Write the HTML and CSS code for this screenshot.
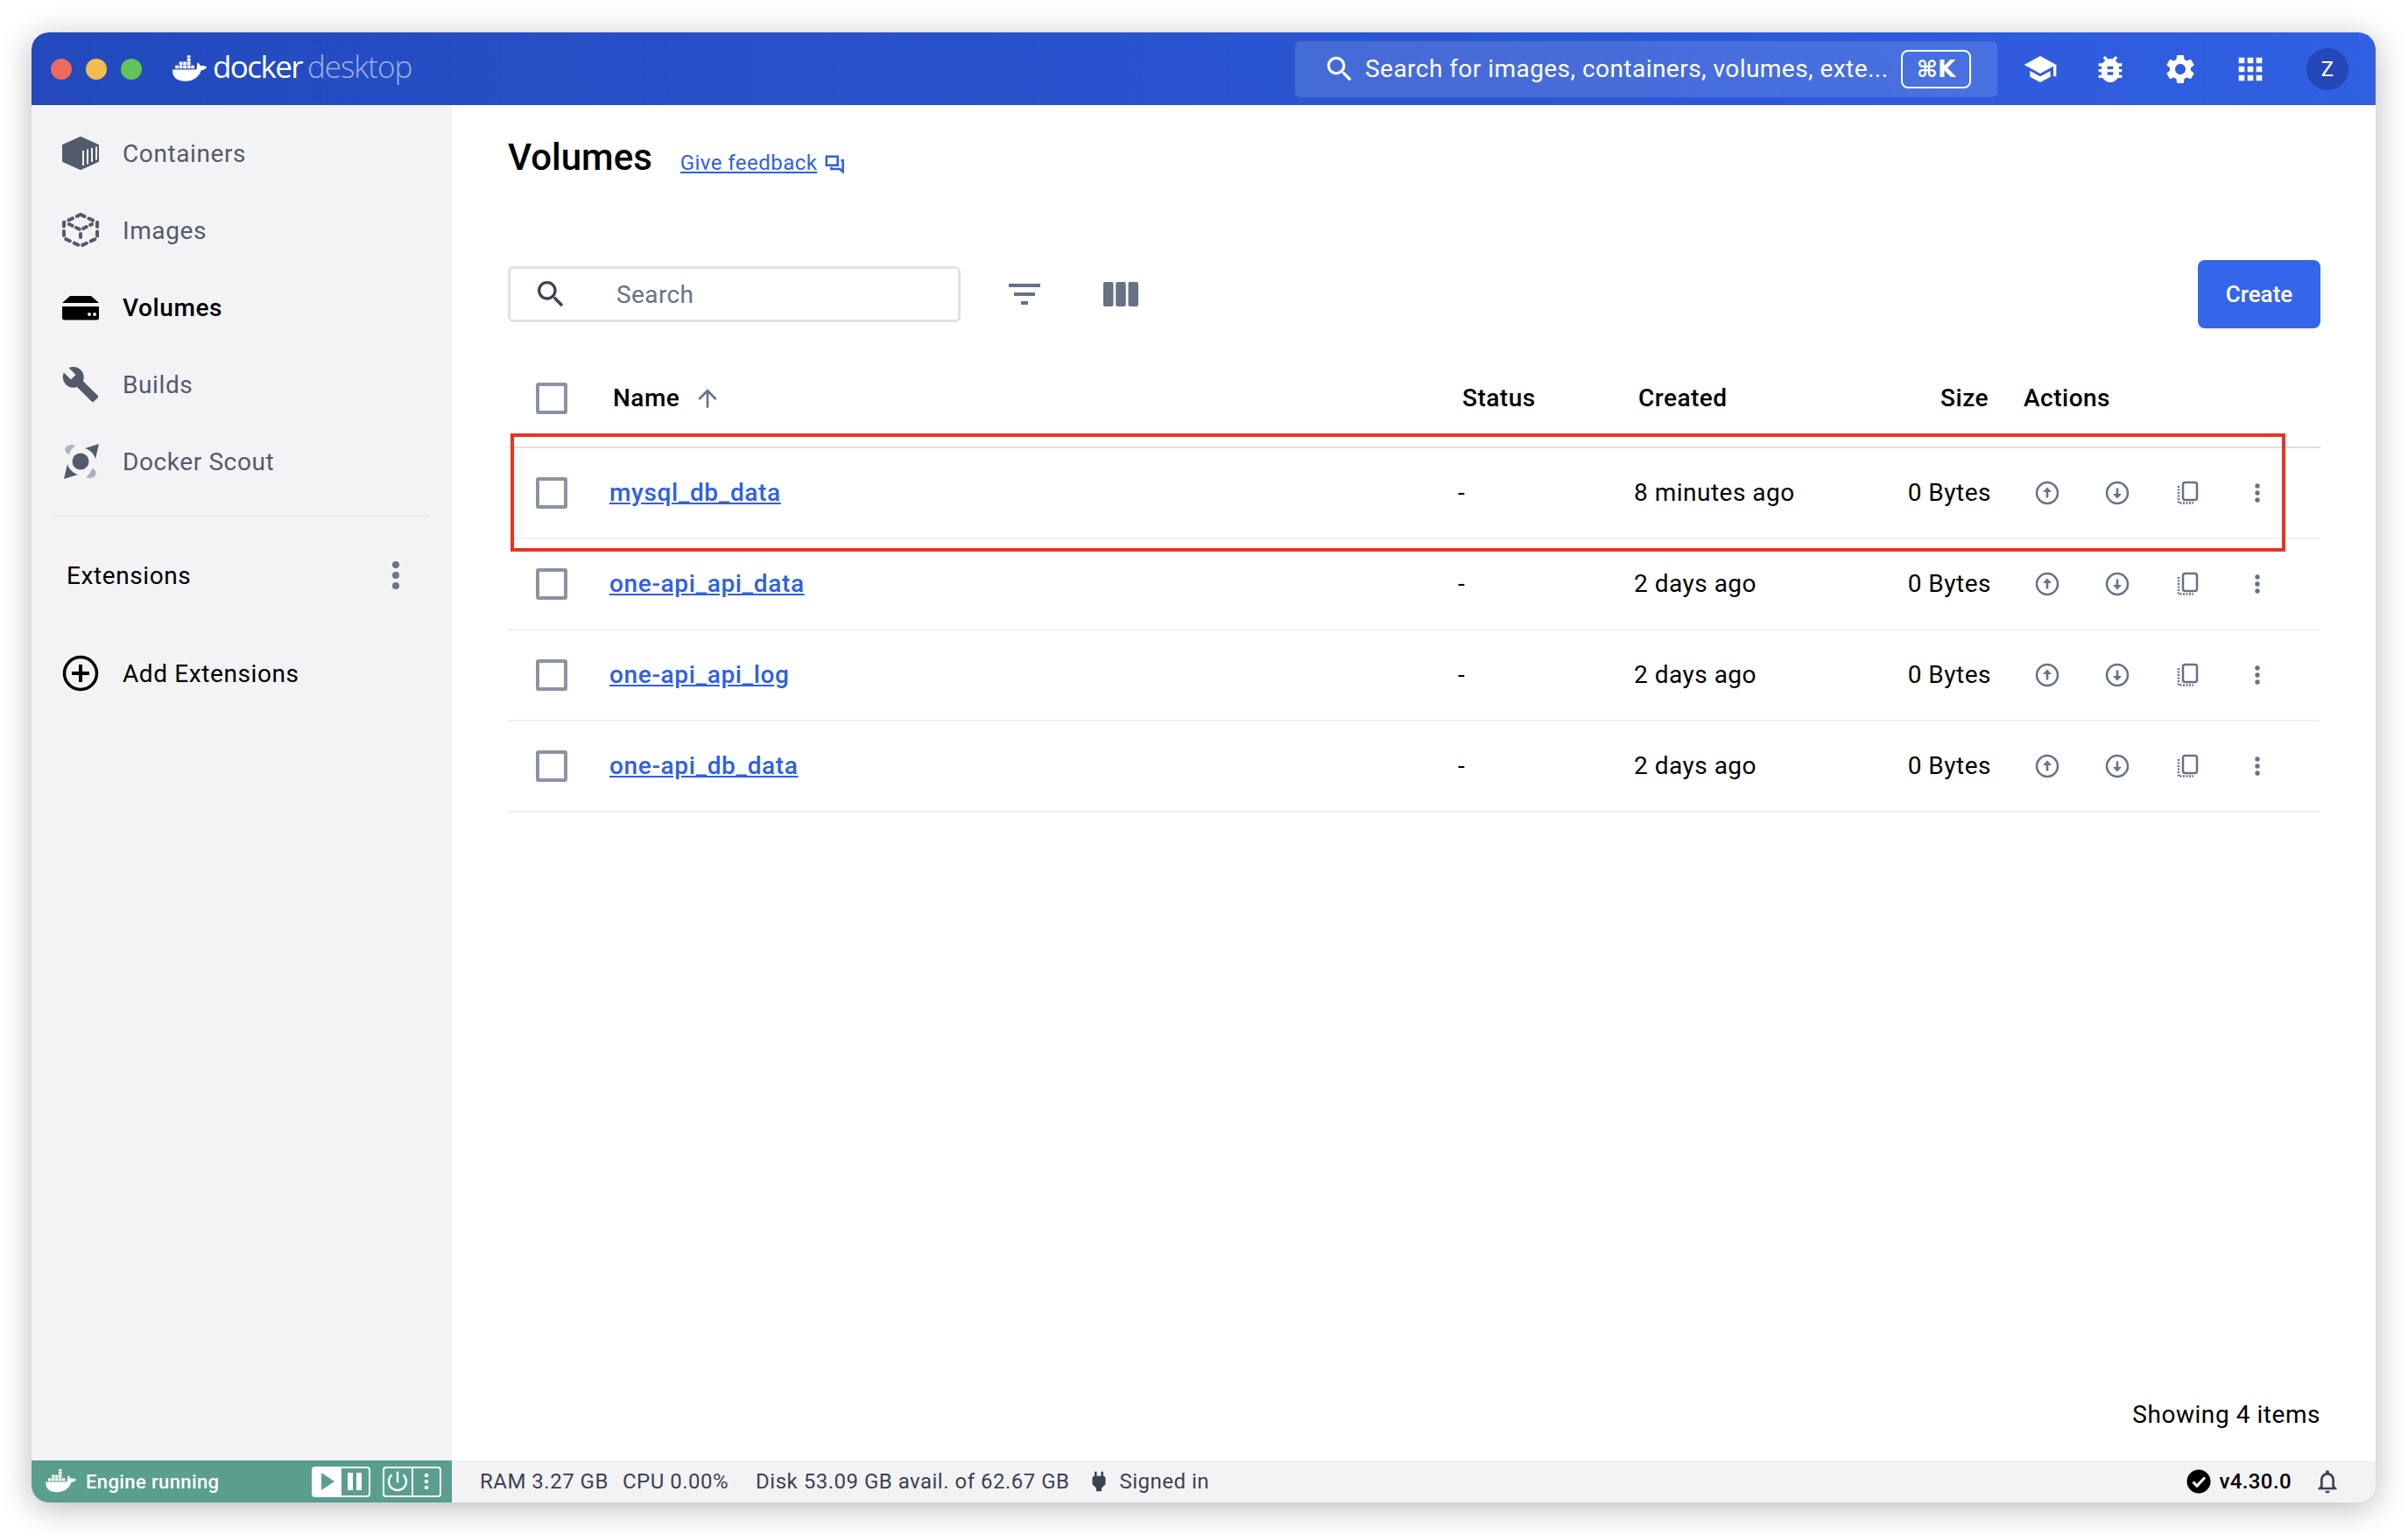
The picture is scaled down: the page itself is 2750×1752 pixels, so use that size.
FILE: index.html
```html
<!DOCTYPE html>
<html lang="en">
<head>
    <meta charset="UTF-8">
    <title>Docker Desktop - Volumes</title>
    <link rel="stylesheet" href="styles.css">
</head>
<body>
    <!-- Iconos repetidos -->
    <svg class="defs" width="0" height="0">
        <symbol id="whale" viewBox="0 0 40 30">
            <path fill="currentColor" d="M4 11h3.600v3.400H4zM8.300 11h3.600v3.400H8.300zM12.600 11h3.600v3.400h-3.600zM16.900 11h3.600v3.400h-3.600zM21.200 11h3.600v3.400h-3.600zM8.300 7h3.600v3.400H8.300zM12.600 7h3.600v3.400h-3.600zM16.900 7h3.600v3.400h-3.600zM16.900 3h3.600v3.400h-3.600zM16.900 0h3.600v2.400h-3.600z"/>
            <path fill="currentColor" d="M1 15.500h24.800c1.200 0 1.800-1.500 1.700-3.300-.1-1.700.2-3.500 1-4.700 1.300 1 2.400 2.500 2.800 4.100 1.500-.7 3.400-.6 6.200.5.800.3.800.9.300 1.400-1.400 1.700-3.500 2.500-5.500 2.600C29.800 23.500 23.500 28 14.800 28 6 28 .6 24.300 1 15.500z"/>
        </symbol>
        <symbol id="up" viewBox="0 0 32 32">
            <circle cx="16" cy="16" r="12" fill="none" stroke="currentColor" stroke-width="2.500"/>
            <path fill="currentColor" d="M16 9.500l5 5.500h-3.700v6.500h-2.600V15H11z"/>
        </symbol>
        <symbol id="down" viewBox="0 0 32 32">
            <circle cx="16" cy="16" r="12" fill="none" stroke="currentColor" stroke-width="2.500"/>
            <path fill="currentColor" d="M16 22.500L11 17h3.700v-6.500h2.600V17H21z"/>
        </symbol>
        <symbol id="copy" viewBox="0 0 32 32">
            <rect x="11" y="4" width="16" height="20" rx="2.500" fill="none" stroke="currentColor" stroke-width="2.500"/>
            <path fill="none" stroke="currentColor" stroke-width="2.500" stroke-dasharray="2 1.500" d="M6 8v19.500h17"/>
        </symbol>
        <symbol id="more" viewBox="0 0 32 32">
            <circle cx="16" cy="8" r="2.700" fill="currentColor"/>
            <circle cx="16" cy="16" r="2.700" fill="currentColor"/>
            <circle cx="16" cy="24" r="2.700" fill="currentColor"/>
        </symbol>
    </svg>

    <div class="window">
        <!-- Barra superior -->
        <header class="titlebar">
            <div class="lights">
                <span class="light red"></span>
                <span class="light yellow"></span>
                <span class="light green"></span>
            </div>
            <div class="logo">
                <svg class="logo-whale" width="42" height="32"><use href="#whale"/></svg>
                <span class="logo-docker">docker</span>
                <span class="logo-desktop">desktop</span>
            </div>
            <div class="global-search">
                <svg class="global-search-icon" viewBox="0 0 24 24" width="38" height="38"><path fill="currentColor" d="M15.500 14h-.79l-.28-.27C15.410 12.590 16 11.110 16 9.500 16 5.910 13.090 3 9.500 3S3 5.910 3 9.500 5.910 16 9.500 16c1.610 0 3.090-.59 4.230-1.570l.27.28v.79l5 4.990L20.490 19l-4.990-5zm-6 0C7.010 14 5 11.990 5 9.500S7.010 5 9.500 5 14 7.010 14 9.500 11.990 14 9.500 14z"/></svg>
                <span class="global-search-text">Search for images, containers, volumes, exte...</span>
                <span class="kbd">⌘K</span>
            </div>
            <div class="top-icons">
                <svg viewBox="0 0 24 24" width="40" height="40"><path fill="currentColor" d="M5 13.180v4L12 21l7-3.820v-4L12 17l-7-3.820zM12 3L1 9l11 6 9-4.910V17h2V9L12 3z"/></svg>
                <svg viewBox="0 0 24 24" width="40" height="40"><path fill="currentColor" d="M20 8h-2.810c-.45-.78-1.070-1.450-1.820-1.960L17 4.410 15.590 3l-2.170 2.170C12.960 5.060 12.490 5 12 5c-.49 0-.96.06-1.410.17L8.410 3 7 4.410l1.620 1.630C7.880 6.550 7.260 7.220 6.810 8H4v2h2.090c-.05.33-.09.66-.09 1v1H4v2h2v1c0 .34.04.67.09 1H4v2h2.810c1.040 1.790 2.970 3 5.190 3s4.150-1.210 5.190-3H20v-2h-2.090c.05-.33.09-.66.09-1v-1h2v-2h-2v-1c0-.34-.04-.67-.09-1H20V8zm-6 8h-4v-2h4v2zm0-4h-4v-2h4v2z"/></svg>
                <svg viewBox="0 0 24 24" width="40" height="40"><path fill="currentColor" d="M19.140 12.940c.04-.3.06-.61.06-.94 0-.32-.02-.64-.07-.94l2.030-1.580c.18-.14.23-.41.12-.61l-1.920-3.320c-.12-.22-.37-.29-.59-.22l-2.390.96c-.5-.38-1.030-.7-1.620-.94l-.36-2.540c-.04-.24-.24-.41-.48-.41h-3.840c-.24 0-.43.17-.47.41l-.36 2.540c-.59.24-1.130.57-1.620.94l-2.390-.96c-.22-.08-.47 0-.59.22L2.740 8.870c-.12.21-.08.47.12.61l2.030 1.580c-.05.3-.09.63-.09.94s.02.64.07.94l-2.030 1.580c-.18.14-.23.41-.12.61l1.920 3.320c.12.22.37.29.59.22l2.390-.96c.5.38 1.030.7 1.620.94l.36 2.540c.05.24.24.41.48.41h3.840c.24 0 .44-.17.47-.41l.36-2.540c.59-.24 1.130-.56 1.620-.94l2.390.96c.22.08.47 0 .59-.22l1.920-3.320c.12-.22.07-.47-.12-.61l-2.010-1.580zM12 15.600c-1.980 0-3.600-1.620-3.600-3.600s1.620-3.600 3.600-3.600 3.600 1.620 3.600 3.600-1.620 3.600-3.600 3.600z"/></svg>
                <svg viewBox="0 0 24 24" width="40" height="40"><path fill="currentColor" d="M4 4h4v4H4zM10 4h4v4h-4zM16 4h4v4h-4zM4 10h4v4H4zM10 10h4v4h-4zM16 10h4v4h-4zM4 16h4v4H4zM10 16h4v4h-4zM16 16h4v4h-4z"/></svg>
            </div>
            <div class="avatar">Z</div>
        </header>

        <div class="middle">
            <!-- Menu lateral -->
            <nav class="sidebar">
                <a class="nav-item">
                    <svg class="nav-icon" viewBox="0 0 44 40" width="44" height="40">
                        <path fill="currentColor" stroke="currentColor" stroke-width="2" stroke-linejoin="round" d="M22 2l20 9v18L22 38 2 29V11z"/>
                        <path fill="none" stroke="#f3f3f6" stroke-width="2" d="M25 17v17M30 15.500v17M35 14v16M40 12.500v15"/>
                    </svg>
                    Containers
                </a>
                <a class="nav-item">
                    <svg class="nav-icon" viewBox="0 0 44 40" width="44" height="40">
                        <path fill="none" stroke="currentColor" stroke-width="4" stroke-linecap="round" stroke-dasharray="5 5.500" d="M22 2l19 9v18L22 38 3 29V11z"/>
                        <path fill="none" stroke="currentColor" stroke-width="4" stroke-linecap="round" stroke-dasharray="4 5" d="M9 13l13 6.500L35 13M22 24v9"/>
                    </svg>
                    Images
                </a>
                <a class="nav-item active">
                    <svg class="nav-icon" viewBox="0 0 44 40" width="44" height="40">
                        <path fill="currentColor" d="M10 7h24l9 8H1zM1 19h42v13c0 1.500-.9 2.500-2.500 2.500h-37C1.900 34.500 1 33.500 1 32z"/>
                        <circle cx="32" cy="28" r="2" fill="#f3f3f6"/>
                        <circle cx="38" cy="28" r="2" fill="#f3f3f6"/>
                    </svg>
                    Volumes
                </a>
                <a class="nav-item">
                    <svg class="nav-icon" viewBox="0 0 24 24" width="48" height="48"><path fill="currentColor" d="M22.700 19l-9.100-9.100c.9-2.300.4-5-1.500-6.900-2-2-5-2.400-7.400-1.300L9 6 6 9 1.600 4.700C.4 7.100.9 10.100 2.900 12.100c1.900 1.900 4.600 2.400 6.900 1.500l9.100 9.100c.4.4 1 .4 1.400 0l2.300-2.300c.5-.4.5-1.100.1-1.400z"/></svg>
                    Builds
                </a>
                <a class="nav-item">
                    <svg class="nav-icon" viewBox="0 0 44 44" width="44" height="44">
                        <circle cx="22" cy="22" r="9.500" fill="currentColor"/>
                        <path fill="currentColor" d="M43 2l-4 17c-2-6-6-10-12-12zM3 42l4-17c2 6 6 10 12 12z"/>
                        <path fill="#aeb1ba" d="M5 6c2-3 8-4 11-2-3 2-6 6-7 10-4-1-6-5-4-8zM39 38c-2 3-8 4-11 2 3-2 6-6 7-10 4 1 6 5 4 8z"/>
                    </svg>
                    Docker Scout
                </a>
                <div class="nav-divider"></div>
                <div class="extensions">
                    <span>Extensions</span>
                    <svg class="ext-more" width="48" height="48" viewBox="0 0 32 32"><use href="#more"/></svg>
                </div>
                <a class="nav-item add-ext">
                    <svg class="nav-icon" viewBox="0 0 44 44" width="44" height="44">
                        <circle cx="22" cy="22" r="18.500" fill="none" stroke="currentColor" stroke-width="3.500"/>
                        <path fill="currentColor" d="M20 12h4v8h8v4h-8v8h-4v-8h-8v-4h8z"/>
                    </svg>
                    Add Extensions
                </a>
            </nav>

            <!-- Contenido principal -->
            <main class="main">
                <div class="title-row">
                    <h1 class="title">Volumes</h1>
                    <a class="feedback">Give feedback</a>
                    <svg class="feedback-icon" viewBox="0 0 24 24" width="22" height="22">
                        <path fill="none" stroke="currentColor" stroke-width="2.800" d="M2 3h14v11H2zM20 8h2.500v14l-4-3.500H8V16"/>
                    </svg>
                </div>

                <div class="toolbar">
                    <div class="search">
                        <svg class="search-icon" viewBox="0 0 24 24" width="40" height="40"><path fill="currentColor" d="M15.500 14h-.79l-.28-.27C15.410 12.590 16 11.110 16 9.500 16 5.910 13.090 3 9.500 3S3 5.910 3 9.500 5.910 16 9.500 16c1.610 0 3.090-.59 4.230-1.570l.27.28v.79l5 4.990L20.490 19l-4.990-5zm-6 0C7.010 14 5 11.990 5 9.500S7.010 5 9.500 5 14 7.010 14 9.500 11.990 14 9.500 14z"/></svg>
                        <span class="search-text">Search</span>
                    </div>
                    <svg class="filter-icon" viewBox="0 0 24 24" width="48" height="48"><path fill="currentColor" d="M10 18h4v-2h-4v2zM3 6v2h18V6H3zm3 7h12v-2H6v2z"/></svg>
                    <svg class="columns-icon" viewBox="0 0 40 28" width="40" height="28"><rect width="11.500" height="28" rx="2" fill="currentColor"/><rect x="14.250" width="11.500" height="28" rx="2" fill="currentColor"/><rect x="28.500" width="11.500" height="28" rx="2" fill="currentColor"/></svg>
                    <button class="create">Create</button>
                </div>

                <div class="table">
                    <div class="row head">
                        <div class="cell"><span class="check"></span></div>
                        <div class="cell name-head">Name
                            <svg class="sort-icon" viewBox="0 0 24 24" width="32" height="32"><path fill="currentColor" d="M4 12l1.410 1.410L11 7.830V20h2V7.830l5.580 5.590L20 12l-8-8-8 8z"/></svg>
                        </div>
                        <div class="cell status-head">Status</div>
                        <div class="cell created-head">Created</div>
                        <div class="cell size size-head">Size</div>
                        <div class="cell actions-head">Actions</div>
                    </div>

                    <div class="row">
                        <div class="cell"><span class="check"></span></div>
                        <div class="cell"><a class="vol-link">mysql_db_data</a></div>
                        <div class="cell">-</div>
                        <div class="cell">8 minutes ago</div>
                        <div class="cell size">0 Bytes</div>
                        <div class="cell actions">
                            <svg width="32" height="32"><use href="#up"/></svg>
                            <svg width="32" height="32"><use href="#down"/></svg>
                            <svg width="32" height="32"><use href="#copy"/></svg>
                            <svg width="32" height="32"><use href="#more"/></svg>
                        </div>
                    </div>

                    <div class="row">
                        <div class="cell"><span class="check"></span></div>
                        <div class="cell"><a class="vol-link">one-api_api_data</a></div>
                        <div class="cell">-</div>
                        <div class="cell">2 days ago</div>
                        <div class="cell size">0 Bytes</div>
                        <div class="cell actions">
                            <svg width="32" height="32"><use href="#up"/></svg>
                            <svg width="32" height="32"><use href="#down"/></svg>
                            <svg width="32" height="32"><use href="#copy"/></svg>
                            <svg width="32" height="32"><use href="#more"/></svg>
                        </div>
                    </div>

                    <div class="row">
                        <div class="cell"><span class="check"></span></div>
                        <div class="cell"><a class="vol-link">one-api_api_log</a></div>
                        <div class="cell">-</div>
                        <div class="cell">2 days ago</div>
                        <div class="cell size">0 Bytes</div>
                        <div class="cell actions">
                            <svg width="32" height="32"><use href="#up"/></svg>
                            <svg width="32" height="32"><use href="#down"/></svg>
                            <svg width="32" height="32"><use href="#copy"/></svg>
                            <svg width="32" height="32"><use href="#more"/></svg>
                        </div>
                    </div>

                    <div class="row">
                        <div class="cell"><span class="check"></span></div>
                        <div class="cell"><a class="vol-link">one-api_db_data</a></div>
                        <div class="cell">-</div>
                        <div class="cell">2 days ago</div>
                        <div class="cell size">0 Bytes</div>
                        <div class="cell actions">
                            <svg width="32" height="32"><use href="#up"/></svg>
                            <svg width="32" height="32"><use href="#down"/></svg>
                            <svg width="32" height="32"><use href="#copy"/></svg>
                            <svg width="32" height="32"><use href="#more"/></svg>
                        </div>
                    </div>
                </div>

                <div class="items-count">Showing 4 items</div>

                <!-- Recuadro rojo sobre la primera fila -->
                <div class="highlight"></div>
            </main>
        </div>

        <!-- Barra de estado -->
        <footer class="statusbar">
            <div class="engine">
                <svg class="engine-whale" width="38" height="28"><use href="#whale"/></svg>
                <span class="engine-text">Engine running</span>
                <div class="engine-group">
                    <span class="engine-btn filled">
                        <svg viewBox="0 0 20 24" width="20" height="24"><path fill="#5a9e8d" d="M3 2l15 10L3 22z"/></svg>
                    </span>
                    <span class="engine-btn">
                        <svg viewBox="0 0 20 24" width="20" height="24"><path fill="#fff" d="M2 2h6v20H2zM12 2h6v20h-6z"/></svg>
                    </span>
                </div>
                <div class="engine-group second">
                    <span class="engine-btn">
                        <svg viewBox="0 0 24 24" width="30" height="30"><path fill="#fff" d="M13 3h-2v10h2V3zm4.830 2.170l-1.420 1.420C17.990 7.860 19 9.810 19 12c0 3.870-3.130 7-7 7s-7-3.130-7-7c0-2.190 1.010-4.140 2.580-5.420L6.170 5.170C4.230 6.820 3 9.260 3 12c0 4.970 4.030 9 9 9s9-4.030 9-9c0-2.740-1.230-5.180-3.170-6.830z"/></svg>
                    </span>
                    <span class="engine-btn">
                        <svg width="28" height="28" viewBox="0 0 32 32"><use href="#more"/></svg>
                    </span>
                </div>
            </div>
            <div class="stats">
                <span class="stat">RAM 3.27 GB</span>
                <span class="stat">CPU 0.00%</span>
                <span class="stat disk">Disk 53.09 GB avail. of 62.67 GB</span>
                <svg class="plug" viewBox="0 0 24 24" width="30" height="30"><path fill="currentColor" d="M16 7V3h-2v4h-4V3H8v4h-.01C6.900 6.990 6 7.890 6 8.980v5.520L9.500 18v3h5v-3l3.500-3.500V9c0-1.100-.9-2-2-2z"/></svg>
                <span class="stat">Signed in</span>
            </div>
            <div class="version">
                <svg viewBox="0 0 28 28" width="28" height="28">
                    <circle cx="14" cy="14" r="13.500" fill="#000"/>
                    <path fill="none" stroke="#fff" stroke-width="3" d="M7.500 14.500l4.500 4.500 9-9.500"/>
                </svg>
                <span class="version-text">v4.30.0</span>
                <svg class="bell" viewBox="0 0 24 24" width="32" height="32"><path fill="currentColor" d="M12 22c1.100 0 2-.9 2-2h-4c0 1.100.9 2 2 2zm6-6v-5c0-3.070-1.630-5.640-4.500-6.320V4c0-.83-.67-1.500-1.500-1.500s-1.500.67-1.500 1.500v.68C7.640 5.360 6 7.920 6 11v5l-2 2v1h16v-1l-2-2zm-2 1H8v-6c0-2.480 1.510-4.500 4-4.500s4 2.020 4 4.500v6z"/></svg>
            </div>
        </footer>
    </div>
</body>
</html>
```

FILE: styles.css
```css
/* Estilo general */
body {
    margin: 0;
    background-color: #fff;
    font-family: Roboto, "Liberation Sans", sans-serif;
    color: #000;
    width: 2750px;
    height: 1752px;
    overflow: hidden;
}

.defs {
    position: absolute;
}

.window {
    margin: 37px 0 0 36px;
    width: 2677px;
    height: 1679px;
    display: flex;
    flex-direction: column;
    border-radius: 20px;
    overflow: hidden;
    background-color: #fff;
    box-shadow: 0 6px 36px rgba(0, 0, 0, 0.28);
}

/* Barra superior */
.titlebar {
    height: 83px;
    flex-shrink: 0;
    display: flex;
    align-items: center;
    padding: 0 31px 0 22px;
    color: #fff;
    background: linear-gradient(90deg, #2349bd, #305fe2);
    box-sizing: border-box;
}

.lights {
    display: flex;
    gap: 16px;
}

.light {
    width: 24px;
    height: 24px;
    border-radius: 50%;
}

.red { background-color: #ee6a5f; }
.yellow { background-color: #f5bd4f; }
.green { background-color: #61c454; }

.logo {
    display: flex;
    align-items: center;
    margin-left: 34px;
}

.logo-whale {
    color: #fff;
    margin-right: 5px;
}

.logo-docker {
    margin-top: -7px;
    font-family: "Open Sans", sans-serif;
    font-size: 35px;
    font-weight: 400;
    letter-spacing: -1.6px;
    margin-right: 6px;
}

.logo-desktop {
    margin-top: -7px;
    font-family: "Open Sans", sans-serif;
    font-size: 35px;
    font-weight: 300;
    letter-spacing: -1px;
    color: #9db2e8;
}

.global-search {
    margin-left: auto;
    width: 802px;
    height: 64px;
    box-sizing: border-box;
    display: flex;
    align-items: center;
    padding-left: 32px;
    border-radius: 6px;
    background-color: rgba(255, 255, 255, 0.13);
}

.global-search-icon {
    flex-shrink: 0;
}

.global-search-text {
    margin-left: 10px;
    width: 604px;
    flex-shrink: 0;
    font-size: 28px;
    letter-spacing: 0.46px;
    white-space: nowrap;
}

.kbd {
    width: 80px;
    height: 44px;
    box-sizing: border-box;
    flex-shrink: 0;
    margin-left: 8px;
    display: flex;
    align-items: center;
    justify-content: center;
    border: 2px solid #fff;
    border-radius: 8px;
    font-family: "DejaVu Sans", sans-serif;
    font-size: 26px;
    font-weight: 700;
}

.top-icons {
    display: flex;
    gap: 40px;
    margin-left: 29px;
}

.avatar {
    width: 48px;
    height: 48px;
    margin-left: 44px;
    display: flex;
    align-items: center;
    justify-content: center;
    border-radius: 50%;
    background-color: #2548b8;
    font-size: 24px;
}

.middle {
    flex: 1;
    display: flex;
    min-height: 0;
}

/* Menu lateral */
.sidebar {
    width: 480px;
    flex-shrink: 0;
    box-sizing: border-box;
    padding-top: 11px;
    background-color: #f3f3f6;
}

.nav-item {
    height: 88px;
    display: flex;
    align-items: center;
    padding-left: 34px;
    font-size: 28px;
    letter-spacing: 0.6px;
    color: #535a6b;
}

.nav-icon {
    width: 44px;
    margin-right: 26px;
    flex-shrink: 0;
}

.nav-item.active {
    color: #000;
    font-weight: 500;
}

.nav-divider {
    height: 2px;
    margin: 17px 24px 0;
    background-color: #e9e9ed;
}

.extensions {
    height: 88px;
    margin-top: 23px;
    padding: 0 40px 0 40px;
    display: flex;
    align-items: center;
    justify-content: space-between;
    font-size: 28px;
    letter-spacing: 0.6px;
}

.ext-more {
    color: #6d7588;
}

.add-ext {
    margin-top: 24px;
    color: #000;
}

/* Contenido principal */
.main {
    flex: 1;
    position: relative;
    display: flex;
    flex-direction: column;
    padding: 33px 63px 35px 64px;
    box-sizing: border-box;
}

.title-row {
    height: 54px;
    display: flex;
    align-items: center;
}

.title {
    margin: 0;
    font-size: 42px;
    font-weight: 500;
    line-height: 54px;
}

.feedback {
    margin-left: 32px;
    margin-top: 12px;
    font-size: 24px;
    letter-spacing: 0.45px;
    color: #2f60e4;
    text-decoration: underline;
}

.feedback-icon {
    margin: 14px 0 0 9px;
    color: #2f60e4;
}

.toolbar {
    height: 78px;
    margin-top: 90px;
    display: flex;
    align-items: center;
}

.search {
    width: 517px;
    height: 64px;
    box-sizing: border-box;
    display: flex;
    align-items: center;
    padding-left: 26px;
    border: 3px solid #e1e2e6;
    border-radius: 6px;
}

.search-icon {
    color: #3c4250;
}

.search-text {
    margin-left: 55px;
    font-size: 28px;
    letter-spacing: 0.4px;
    color: #677285;
}

.filter-icon {
    margin-left: 49px;
    color: #677285;
}

.columns-icon {
    margin-left: 66px;
    color: #677285;
}

.create {
    margin-left: auto;
    width: 140px;
    height: 78px;
    border: none;
    border-radius: 8px;
    background-color: #3565e8;
    color: #fff;
    font-family: Roboto, sans-serif;
    font-size: 26px;
    font-weight: 500;
}

/* Tabla */
.table {
    margin-top: 27px;
}

.row {
    height: 104px;
    box-sizing: border-box;
    display: grid;
    grid-template-columns: 116px 969px 201px 200px 208px 375px;
    align-items: center;
    padding-bottom: 2px;
    border-bottom: 2px solid #f1f1f3;
    font-size: 28px;
    letter-spacing: 0.5px;
}

.row.head {
    height: 110px;
    border-bottom-color: #dfdfe2;
    font-weight: 500;
    padding-bottom: 3px;
}

.cell {
    white-space: nowrap;
}

.check {
    display: block;
    width: 36px;
    height: 36px;
    margin: 2px 0 0 32px;
    box-sizing: border-box;
    border: 4px solid #8b93a3;
    border-radius: 3px;
}

.row.head .check {
    margin-top: 0;
}

.name-head {
    display: flex;
    align-items: center;
    padding-left: 4px;
}

.sort-icon {
    margin-left: 16px;
    color: #677285;
}

.status-head,
.created-head {
    padding-left: 5px;
}

.size {
    text-align: right;
}

.size-head {
    padding-right: 3px;
}

.actions-head {
    padding-left: 37px;
}

.vol-link {
    font-weight: 500;
    letter-spacing: 0.65px;
    color: #2f60e4;
    text-decoration: underline;
}

.actions {
    display: flex;
    gap: 48px;
    margin-top: 2px;
    padding-left: 48px;
    color: #677285;
}

.items-count {
    margin-top: auto;
    text-align: right;
    font-size: 28px;
    letter-spacing: 0.55px;
    line-height: 34px;
}

.highlight {
    position: absolute;
    left: 67px;
    top: 375px;
    width: 2027px;
    height: 135px;
    box-sizing: border-box;
    border: 4px solid #e83323;
}

/* Barra de estado */
.statusbar {
    height: 48px;
    flex-shrink: 0;
    display: flex;
    align-items: center;
    background-color: #f3f3f6;
    color: #3c4250;
    font-size: 24px;
}

.engine {
    width: 480px;
    height: 100%;
    flex-shrink: 0;
    display: flex;
    align-items: center;
    padding-left: 15px;
    box-sizing: border-box;
    background-color: #5a9e8d;
    color: #fff;
}

.engine-text {
    margin-left: 9px;
    width: 258px;
    font-size: 22px;
    font-weight: 500;
    letter-spacing: 0.38px;
}

.engine-group {
    width: 67px;
    height: 35px;
    box-sizing: border-box;
    flex-shrink: 0;
    display: flex;
    border: 2px solid #fff;
    border-radius: 4px;
    overflow: hidden;
}

.engine-group.second {
    margin-left: 14px;
}

.engine-btn {
    flex: 1;
    display: flex;
    align-items: center;
    justify-content: center;
}

.engine-btn.filled {
    background-color: #fff;
}

.second .engine-btn + .engine-btn {
    border-left: 2px solid #fff;
}

.stats {
    display: flex;
    align-items: center;
    padding-left: 32px;
}

.stat {
    letter-spacing: 0.5px;
    white-space: nowrap;
}

.stat + .stat {
    margin-left: 16px;
}

.stat.disk {
    margin-left: 31px;
}

.plug {
    margin: 0 9px 0 18px;
}

.version {
    margin-left: auto;
    padding-right: 39px;
    display: flex;
    align-items: center;
}

.version-text {
    margin-left: 9px;
    font-weight: 500;
    color: #000;
    letter-spacing: 0.4px;
}

.bell {
    margin-left: 25px;
}
```
